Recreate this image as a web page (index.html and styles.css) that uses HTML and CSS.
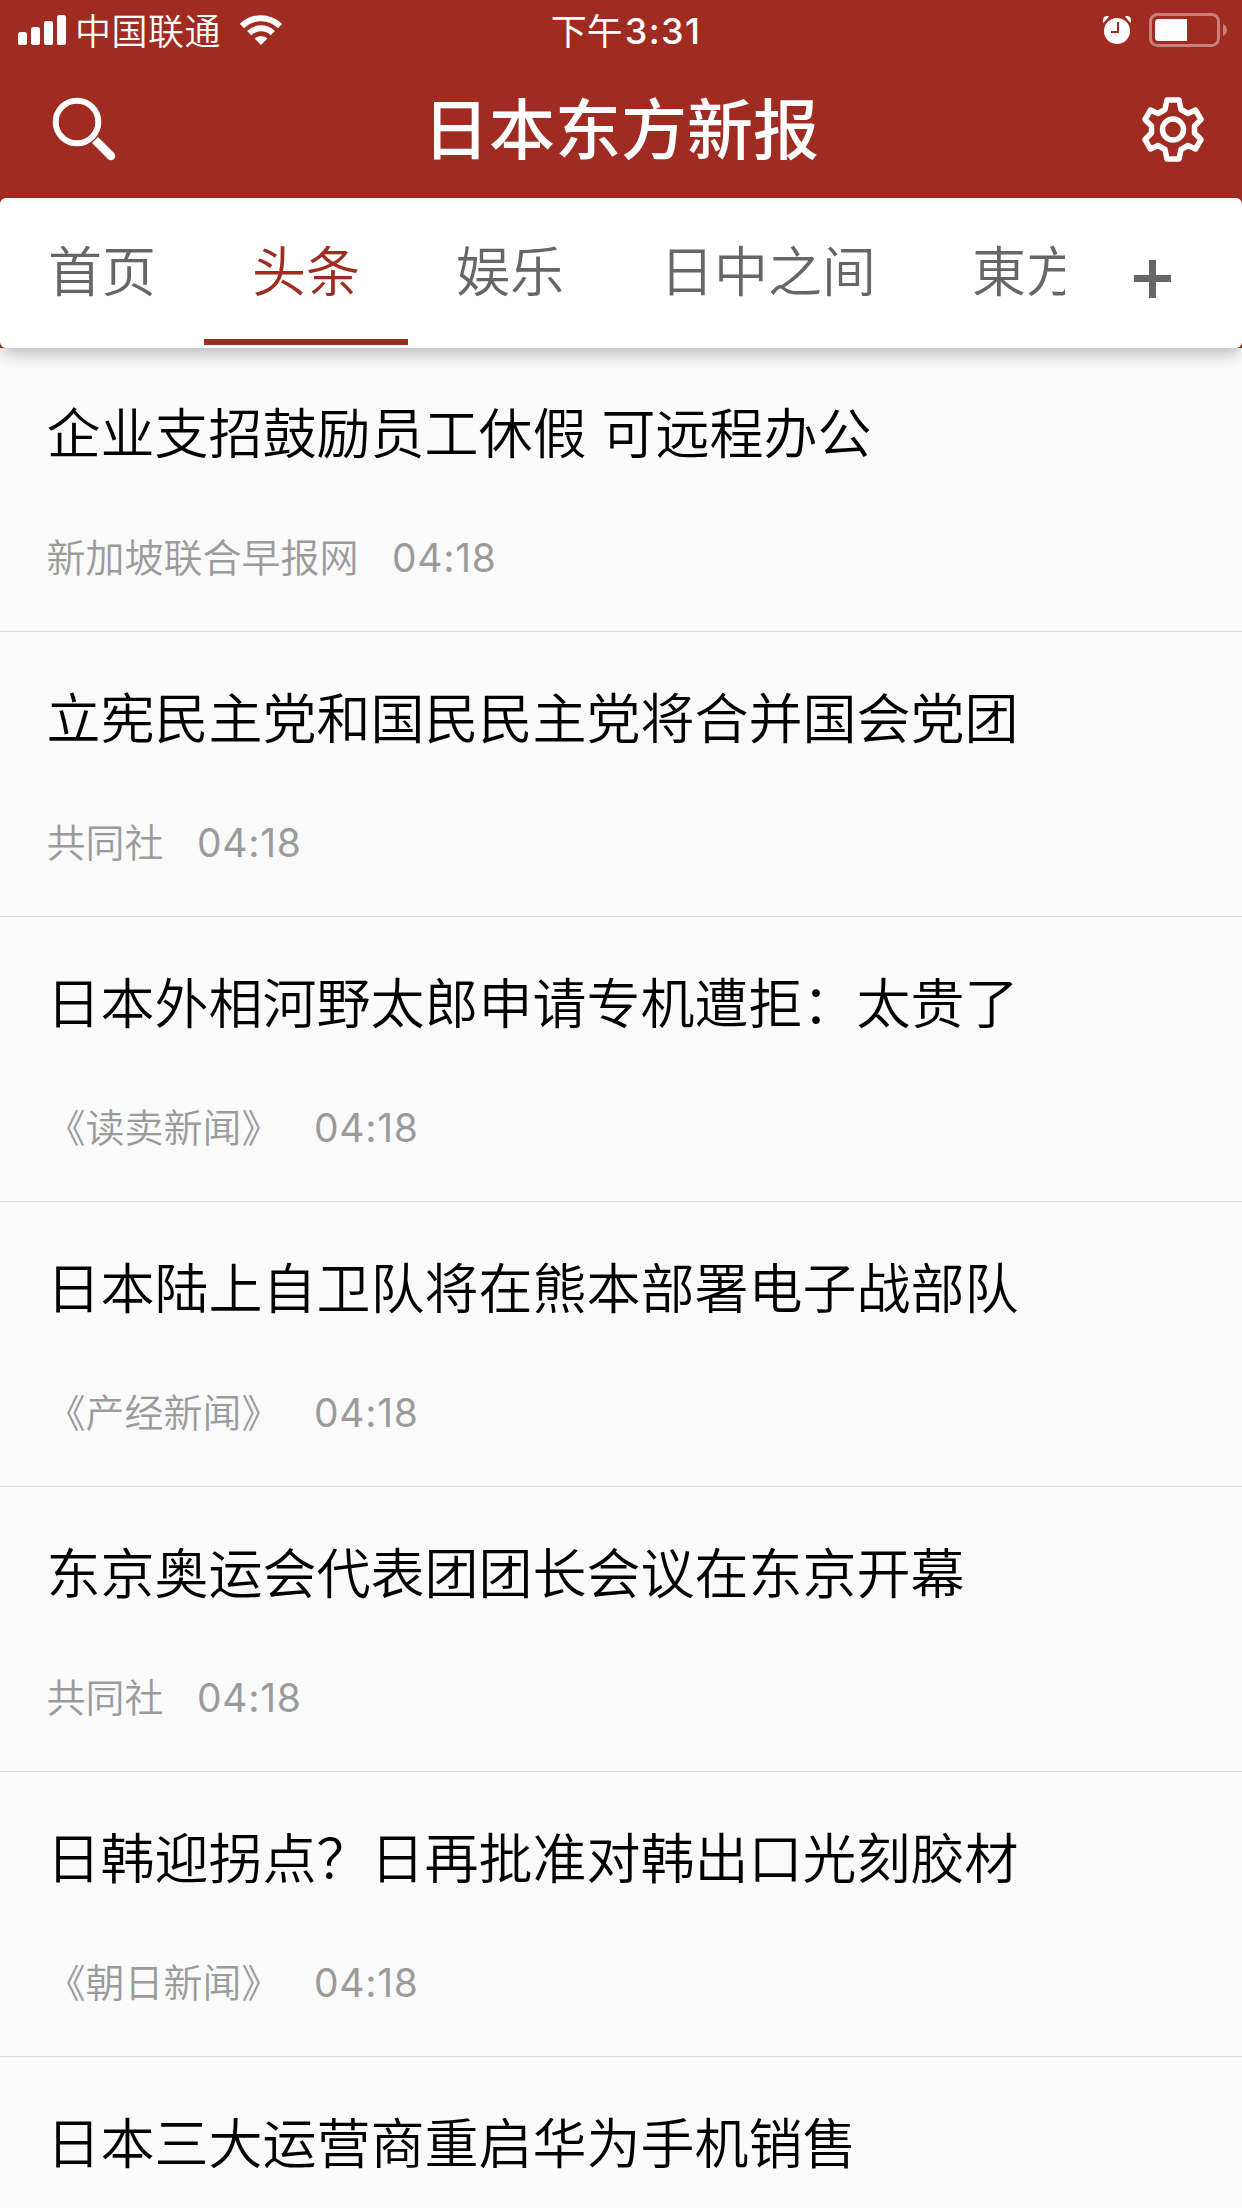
FILE: index.html
```html
<!DOCTYPE html>
<html lang="zh-CN">
<head>
<meta charset="utf-8">
<title>日本东方新报</title>
<link rel="stylesheet" href="styles.css">
</head>
<body>
<header class="header">
  <div class="status">
    <div class="status-left">
      <svg class="signal" width="48" height="30" viewBox="0 0 48 30" fill="#fff"><rect x="0" y="17" width="9" height="13" rx="2.6"/><rect x="13" y="12" width="9" height="18" rx="2.6"/><rect x="26" y="6" width="9" height="24" rx="2.6"/><rect x="39" y="0" width="9" height="30" rx="2.6"/></svg>
      <span class="carrier">中国联通</span>
      <svg class="wifi" width="42" height="30" viewBox="0 0 42 30"><g fill="none" stroke="#fff" stroke-width="6"><path d="M2 11A27 27 0 0 1 40 11"/><path d="M9.2 18.2A16.8 16.8 0 0 1 32.8 18.2"/></g><path d="M21 30L14.6 23.6A9.2 9.2 0 0 1 27.4 23.6Z" fill="#fff"/></svg>
    </div>
    <div class="clock">下午<span class="digits">3:31</span></div>
    <div class="status-right">
      <svg class="alarm" width="28" height="28" viewBox="0 0 28 28"><circle cx="14" cy="15" r="13" fill="#fff"/><path d="M0 6.5V3Q1 0 4 0Q6 0 6 .8L.8 6.5ZM28 6.5V3Q27 0 24 0Q22 0 22 .8L27.2 6.5Z" fill="#fff"/><path d="M15 6V16H8" fill="none" stroke="#a02b20" stroke-width="2"/></svg>
      <svg class="battery" width="78" height="34" viewBox="0 0 78 34"><rect x="1.5" y="1.5" width="68" height="31" rx="7" fill="none" stroke="#c9807a" stroke-width="3"/><path d="M38 6V28H9.500Q6 28 6 24.500V9.500Q6 6 9.500 6Z" fill="#fff"/><path d="M74 11Q78 13 78 17T74 23Z" fill="#c9807a"/></svg>
    </div>
  </div>
  <div class="titlebar">
    <svg class="search" width="64" height="65" viewBox="0 0 64 65" fill="none" stroke="#fff"><circle cx="25" cy="25" r="21.300" stroke-width="6"/><path d="M43 43L59 59" stroke-width="8.500"/><circle cx="59" cy="59" r="3" stroke-width="2.500" fill="#fff"/></svg>
    <h1 class="title">日本东方新报</h1>
    <svg class="gear" width="62" height="65" viewBox="0 0 62 65" fill="none" stroke="#fff" stroke-width="5.500" stroke-linejoin="round"><circle cx="31" cy="32.500" r="10.500"/><path d="M25 3H37L39 12.500L46 16.500L53.500 13L59 22.500L52.500 29V36L59 42.500L53.500 52L46 48.500L39 52.500L37 62H25L23 52.500L16 48.500L8.500 52L3 42.500L9.500 36V29L3 22.500L8.500 13L16 16.500L23 12.500Z"/></svg>
  </div>
</header>
<div class="tab-wrap">
  <nav class="tabs">
    <div class="tab-list">
      <a class="tab">首页</a>
      <a class="tab active">头条</a>
      <a class="tab">娱乐</a>
      <a class="tab">日中之间</a>
      <a class="tab">東方</a>
    </div>
    <svg class="plus" width="37" height="38" viewBox="0 0 37 38" fill="#666"><path d="M15 0H22V15H37V22H22V38H15V22H0V15H15Z"/></svg>
  </nav>
</div>
<main class="list">
  <article class="item"><h2>企业支招鼓励员工休假 可远程办公</h2><p><span>新加坡联合早报网</span><time>04:18</time></p></article>
  <article class="item"><h2>立宪民主党和国民民主党将合并国会党团</h2><p><span>共同社</span><time>04:18</time></p></article>
  <article class="item"><h2>日本外相河野太郎申请专机遭拒：太贵了</h2><p><span>《读卖新闻》</span><time>04:18</time></p></article>
  <article class="item"><h2>日本陆上自卫队将在熊本部署电子战部队</h2><p><span>《产经新闻》</span><time>04:18</time></p></article>
  <article class="item"><h2>东京奥运会代表团团长会议在东京开幕</h2><p><span>共同社</span><time>04:18</time></p></article>
  <article class="item"><h2>日韩迎拐点？日再批准对韩出口光刻胶材</h2><p><span>《朝日新闻》</span><time>04:18</time></p></article>
  <article class="item"><h2>日本三大运营商重启华为手机销售</h2></article>
</main>
</body>
</html>
```
FILE: styles.css
```css
* { box-sizing: border-box; margin: 0; padding: 0; }
body {
  width: 1242px; height: 2208px; overflow: hidden;
  display: flex; flex-direction: column;
  background: #fafafa; color: #000;
  font-family: "Noto Sans CJK SC", sans-serif; font-weight: 350;
}
svg { display: block; flex: none; }
.header { flex: none; height: 198px; background: #a02b20; color: #fff; }
.status {
  height: 60px; display: grid; grid-template-columns: 1fr auto 1fr;
  align-items: center; padding: 0 15px 0 18px; font-size: 36px; line-height: 58px;
}
.status-left { display: flex; align-items: center; }
.carrier { margin-left: 9px; height: 60px; letter-spacing: 0.5px; }
.wifi { margin-left: 19px; }
.clock { height: 60px; font-weight: 400; display: flex; padding-left: 7px; }
.digits { font-family: "Inter", sans-serif; font-weight: 550; letter-spacing: 1.4px; line-height: 62px; padding-left: 2px; }
.status-right { display: flex; justify-content: flex-end; align-items: center; gap: 18px; }
.titlebar {
  height: 138px; display: flex; align-items: flex-start;
  padding: 37px 38px 0 52px;
}
.title { flex: 1; margin-left: 307px; margin-top: -5px; font-size: 66px; line-height: 66px; font-weight: 500; }
.tab-wrap { flex: none; height: 150px; background: #a02b20; }
.tabs {
  height: 150px; background: #fff; border-radius: 6px;
  display: flex; align-items: flex-start; position: relative;
  box-shadow: 0 9px 15px -3px rgba(0,0,0,.25);
}
.tab-list { width: 1065px; display: flex; overflow: hidden; }
.tab {
  flex: none; height: 147px; padding: 0 48px; color: #666;
  font-size: 54px; line-height: 142px; border-bottom: 6px solid transparent;
}
.active { color: #a02b20; border-color: #a02b20; }
.plus { margin: 62px 0 0 69px; }
.list { flex: 1; overflow: hidden; }
.item { height: 285px; padding: 44px 46.5px 0; border-bottom: 1px solid #d9d9d9; }
.item:first-child { height: 284px; padding-top: 43px; }
.item h2 { font-size: 54px; line-height: 80px; font-weight: 350; white-space: pre; word-spacing: 3px; }
.item p {
  display: flex; margin-top: 55px; color: #9b9b9b;
  font-size: 39px; line-height: 59px;
}
.item time {
  margin-left: 33.5px; font-family: "Inter", sans-serif; font-weight: 400;
  line-height: 64px; letter-spacing: 0.7px;
}
```
